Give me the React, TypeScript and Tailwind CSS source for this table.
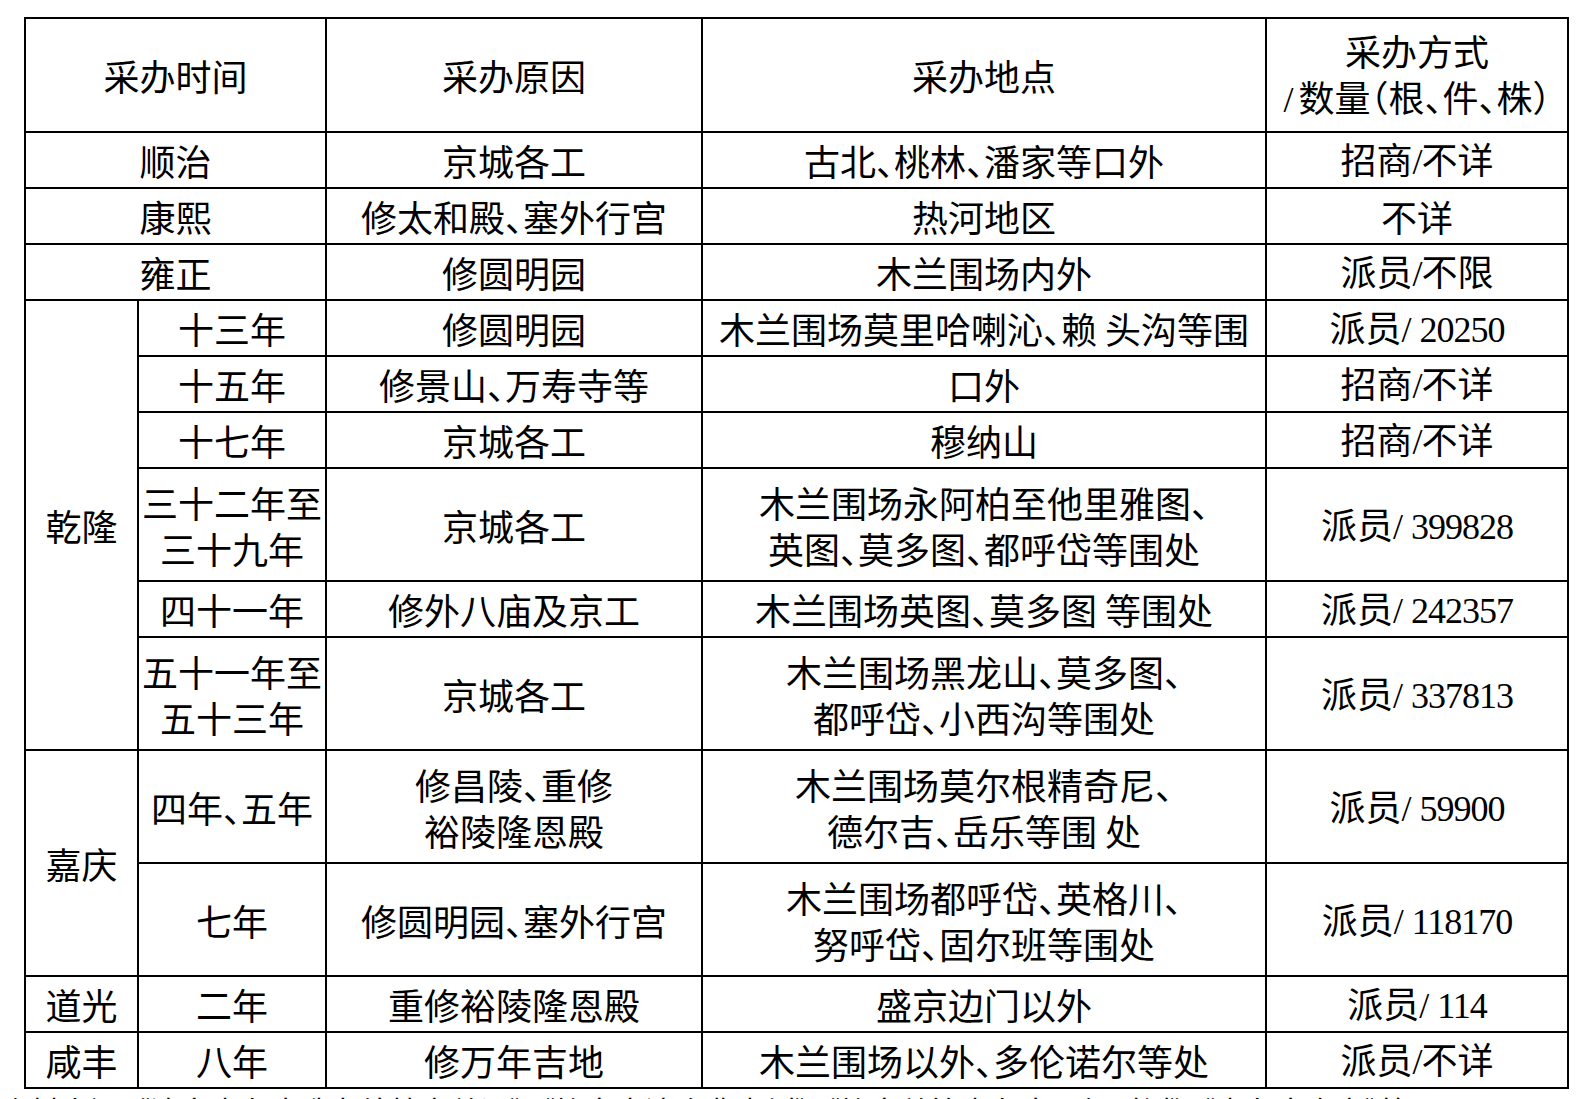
import React from "react";

type Cell = { text: React.ReactNode; rowSpan?: number; colSpan?: number };

const cjk = "font-['Noto_Sans_CJK_SC','Noto_Sans_CJK_JP',sans-serif]";
const serif = "font-['Liberation_Serif',serif] text-[36px] tracking-[-1px]";

function Num({ n }: { n: string }) {
  return (
    <>
      派员<span className={serif}>/</span>
      <span className={`${serif} ml-[9px]`}>{n}</span>
    </>
  );
}

function Slash({ a, b }: { a: string; b: string }) {
  return (
    <>
      {a}
      <span className={serif}>/</span>
      {b}
    </>
  );
}

const rows: { h: string; cells: Cell[] }[] = [
  {
    h: "h-[56px]",
    cells: [
      { text: "顺治", colSpan: 2 },
      { text: "京城各工" },
      { text: "古北、桃林、潘家等口外" },
      { text: <Slash a="招商" b="不详" /> },
    ],
  },
  {
    h: "h-[56px]",
    cells: [
      { text: "康熙", colSpan: 2 },
      { text: "修太和殿、塞外行宫" },
      { text: "热河地区" },
      { text: "不详" },
    ],
  },
  {
    h: "h-[56px]",
    cells: [
      { text: "雍正", colSpan: 2 },
      { text: "修圆明园" },
      { text: "木兰围场内外" },
      { text: <Slash a="派员" b="不限" /> },
    ],
  },
  {
    h: "h-[56px]",
    cells: [
      { text: "乾隆", rowSpan: 6 },
      { text: "十三年" },
      { text: "修圆明园" },
      { text: "木兰围场莫里哈喇沁、赖 头沟等围" },
      { text: <Num n="20250" /> },
    ],
  },
  {
    h: "h-[56px]",
    cells: [
      { text: "十五年" },
      { text: "修景山、万寿寺等" },
      { text: "口外" },
      { text: <Slash a="招商" b="不详" /> },
    ],
  },
  {
    h: "h-[56px]",
    cells: [
      { text: "十七年" },
      { text: "京城各工" },
      { text: "穆纳山" },
      { text: <Slash a="招商" b="不详" /> },
    ],
  },
  {
    h: "h-[113px]",
    cells: [
      {
        text: (
          <>
            三十二年至
            <br />
            三十九年
          </>
        ),
      },
      { text: "京城各工" },
      {
        text: (
          <>
            木兰围场永阿柏至他里雅图、
            <br />
            英图、莫多图、都呼岱等围处
          </>
        ),
      },
      { text: <Num n="399828" /> },
    ],
  },
  {
    h: "h-[56px]",
    cells: [
      { text: "四十一年" },
      { text: "修外八庙及京工" },
      { text: "木兰围场英图、莫多图 等围处" },
      { text: <Num n="242357" /> },
    ],
  },
  {
    h: "h-[113px]",
    cells: [
      {
        text: (
          <>
            五十一年至
            <br />
            五十三年
          </>
        ),
      },
      { text: "京城各工" },
      {
        text: (
          <>
            木兰围场黑龙山、莫多图、
            <br />
            都呼岱、小西沟等围处
          </>
        ),
      },
      { text: <Num n="337813" /> },
    ],
  },
  {
    h: "h-[113px]",
    cells: [
      { text: "嘉庆", rowSpan: 2 },
      { text: "四年、五年" },
      {
        text: (
          <>
            修昌陵、重修
            <br />
            裕陵隆恩殿
          </>
        ),
      },
      {
        text: (
          <>
            木兰围场莫尔根精奇尼、
            <br />
            德尔吉、岳乐等围 处
          </>
        ),
      },
      { text: <Num n="59900" /> },
    ],
  },
  {
    h: "h-[113px]",
    cells: [
      { text: "七年" },
      { text: "修圆明园、塞外行宫" },
      {
        text: (
          <>
            木兰围场都呼岱、英格川、
            <br />
            努呼岱、固尔班等围处
          </>
        ),
      },
      { text: <Num n="118170" /> },
    ],
  },
  {
    h: "h-[56px]",
    cells: [
      { text: "道光" },
      { text: "二年" },
      { text: "重修裕陵隆恩殿" },
      { text: "盛京边门以外" },
      { text: <Num n="114" /> },
    ],
  },
  {
    h: "h-[56px]",
    cells: [
      { text: "咸丰" },
      { text: "八年" },
      { text: "修万年吉地" },
      { text: "木兰围场以外、多伦诺尔等处" },
      { text: <Slash a="派员" b="不详" /> },
    ],
  },
];

const td =
  "border-2 border-black p-0 text-center align-middle whitespace-nowrap leading-[46px]";

export default function App() {
  return (
    <div
      className={`w-[1589px] h-[1099px] overflow-hidden bg-white text-black ${cjk} text-[36px] [font-feature-settings:'halt']`}
    >
      <div className="pl-[24px] pt-[17px]">
        <table className="table-fixed border-collapse w-[1543px]">
          <colgroup>
            <col className="w-[113px]" />
            <col className="w-[188px]" />
            <col className="w-[376px]" />
            <col className="w-[564px]" />
            <col className="w-[302px]" />
          </colgroup>
          <tbody>
            <tr className="h-[114px]">
              <td className={td} colSpan={2}>
                采办时间
              </td>
              <td className={td}>采办原因</td>
              <td className={td}>采办地点</td>
              <td className={td}>
                采办方式
                <br />
                <span className={`${serif} mr-[6px]`}>/</span>数量（根、件、株）
              </td>
            </tr>
            {rows.map((r, i) => (
              <tr key={i} className={r.h}>
                {r.cells.map((c, j) => (
                  <td
                    key={j}
                    className={td}
                    rowSpan={c.rowSpan}
                    colSpan={c.colSpan}
                  >
                    {c.text}
                  </td>
                ))}
              </tr>
            ))}
          </tbody>
        </table>
      </div>
      <p className="mt-[6px] whitespace-nowrap text-[30px] leading-[30px]">
        资料来源：《清宫内务府造办处档案总汇》、《钦定大清会典事例》、《钦定总管内务府现行则例》、《内务府奏案》等。
      </p>
    </div>
  );
}
